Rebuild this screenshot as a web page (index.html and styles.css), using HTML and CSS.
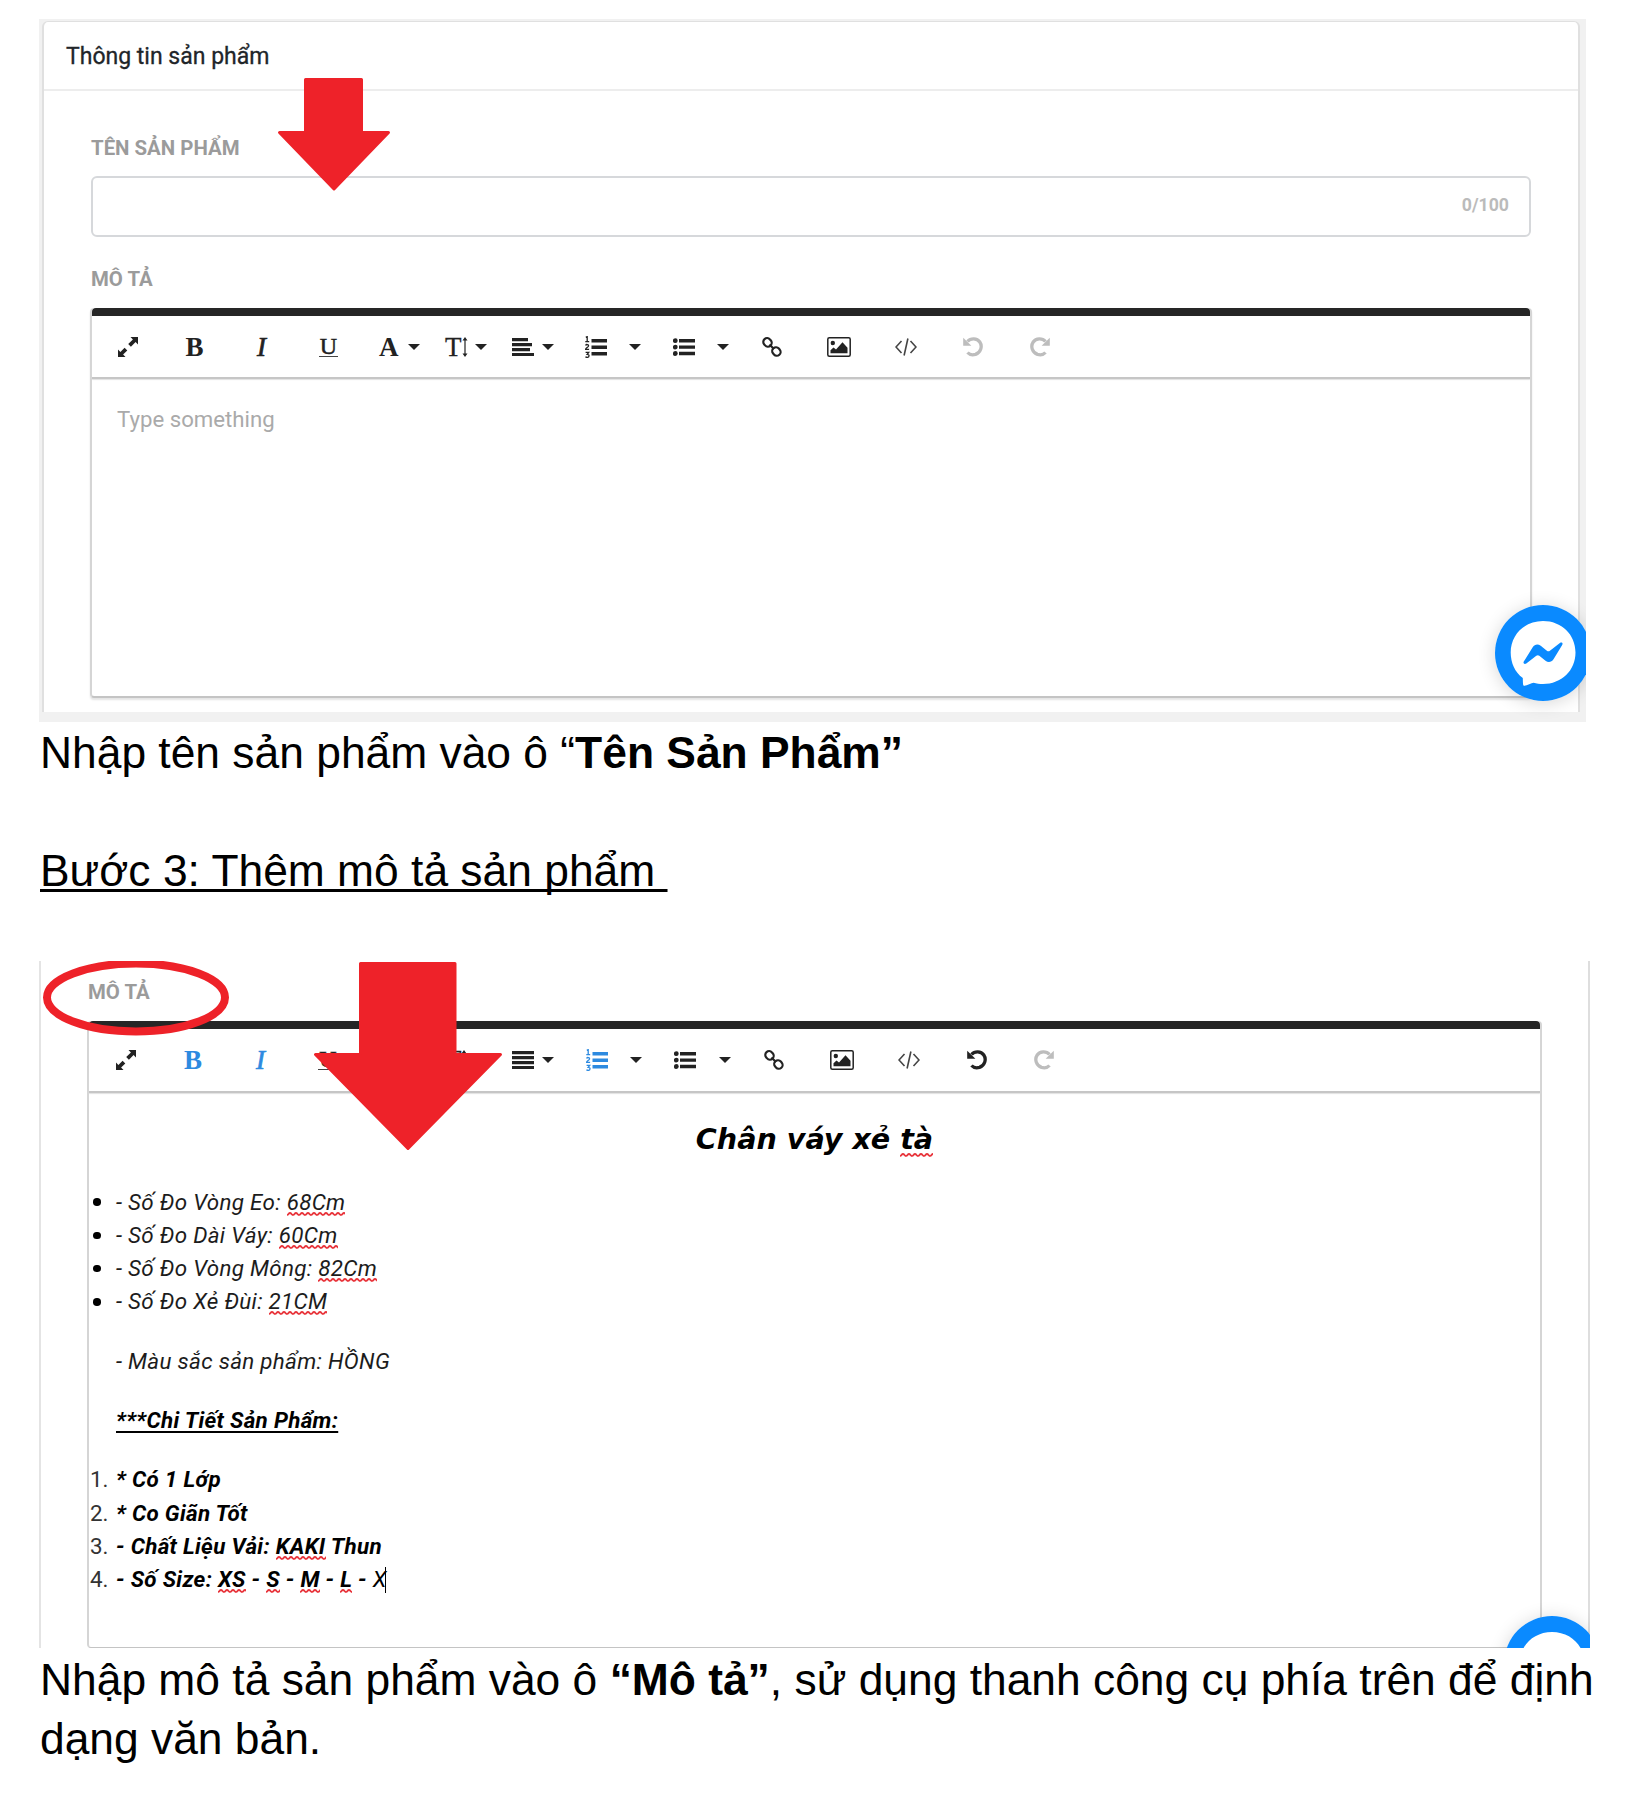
FILE: index.html
```html
<!DOCTYPE html>
<html lang="vi">
<head>
<meta charset="utf-8">
<title>Hướng dẫn thêm sản phẩm</title>
<link rel="stylesheet" href="styles.css">
</head>
<body>
<svg class="defs" width="0" height="0" aria-hidden="true">
  <symbol id="expand" viewBox="0 0 20 20"><path d="M20 0v7.500l-2.400-2.400-4.700 4.700-2.700-2.700 4.700-4.700L12.500 0zM0 20v-7.500l2.400 2.400 4.200-4.200 2.700 2.700-4.200 4.200L7.500 20z"/></symbol>
  <symbol id="caret" viewBox="0 0 12 6"><path d="M0 0h12L6 6z"/></symbol>
  <symbol id="updown" viewBox="0 0 6 20"><path d="M3 0l2.500 3.500H3.600v13h1.900L3 20 .5 16.500h1.900v-13H.5z"/></symbol>
  <symbol id="left" viewBox="0 0 22 18"><path d="M0 0h16v3.200H0zM0 5h20v3.200H0zM0 10h18v3.200H0zM0 15h22v3.200H0z"/></symbol>
  <symbol id="justify" viewBox="0 0 22 18"><path d="M0 0h22v3.200H0zM0 5h22v3.200H0zM0 10h22v3.200H0zM0 15h22v3.200H0z"/></symbol>
  <symbol id="ol" viewBox="0 0 22 22"><path d="M6.500 3H22v3.400H6.500zM6.500 9.500H22v3.400H6.500zM6.500 16H22v3.400H6.500z"/><path d="M.8 1.400L2.200.6v4.800M.3 5.600h3.900M.6 9.400C1.200 8 3.800 8.300 3.500 10 3.300 11.200.8 12 .6 13.300h3.500M.6 16.400h3.100L2.200 18.300c2.500 0 2.400 3.100 0 3.100-.8 0-1.400-.3-1.700-.8" fill="none" stroke="currentColor" stroke-width="1.300"/></symbol>
  <symbol id="ul" viewBox="0 0 22 18"><path d="M6 1h16v3.400H6zM6 7.400h16v3.400H6zM6 13.800h16v3.400H6z"/><circle cx="2.300" cy="2.700" r="2.400"/><circle cx="2.300" cy="9.100" r="2.400"/><circle cx="2.300" cy="15.500" r="2.400"/></symbol>
  <symbol id="link" viewBox="0 0 20 20"><g fill="none" stroke="currentColor" stroke-width="2.200"><rect x="1.100" y="1.600" width="8.800" height="7.600" rx="3.800" transform="rotate(48 5.500 5.400)"/><rect x="10" y="10.700" width="8.800" height="7.600" rx="3.800" transform="rotate(48 14.400 14.500)"/><path d="M7.500 7.500l4.500 4.500"/></g></symbol>
  <symbol id="image" viewBox="0 0 24 20"><rect x=".8" y=".8" width="22.400" height="18.400" rx="1.500" fill="none" stroke="currentColor" stroke-width="1.500"/><circle cx="5.800" cy="6" r="2.200"/><path d="M3.500 16.200v-3l3-2.700 2.500 1.900 6.500-7.200 5 5.500v5.500z"/></symbol>
  <symbol id="code" viewBox="0 0 22 18"><path d="M6.500 3L1 9l5.500 6M15.500 3L21 9l-5.500 6M12.900.5L9.100 17.500" fill="none" stroke="currentColor" stroke-width="1.600"/></symbol>
  <symbol id="undo" viewBox="0 0 20 20"><path d="M4.500 4.500C7.500 1 14 .8 16.800 5c3 4.500.8 10.500-4.300 12.400-3 .8-6.200.1-8-1.900" fill="none" stroke="currentColor" stroke-width="3.300"/><path d="M.2.800v8h8.200z"/></symbol>
  <symbol id="messenger" viewBox="0 0 96 96"><circle cx="48" cy="48" r="48" fill="#0a8aff"/><path fill="#fff" d="M48 16c18.500 0 32.500 13.500 32.500 31.500S66.500 79 48 79c-3.300 0-6.500-.4-9.500-1.300-2 0-6.500 3-9 3-1.700 0-1.500-1-1.700-7.700C20 67.200 15.700 58 15.700 47.500 15.700 29.500 29.500 16 48 16z"/><path fill="#0a8aff" d="M28.800 56.500l8.900-14.300c2-3 5.200-3.500 8-1.500l6.200 5c1 .8 2 .8 3 0l10-7.700c1.800-1.200 3.400.2 2.300 2L58.500 54.300c-2 3-5.200 3.500-8 1.500l-6.200-5c-1-.8-2-.8-3 0l-10 7.700c-1.800 1.200-3.500-.2-2.500-2z"/></symbol>
</svg>
<main class="doc">

  <section class="shot shot-form">
    <div class="card">
      <header class="card-head"><span class="card-title">Thông tin sản phẩm</span></header>
      <div class="card-body">
        <div class="label">TÊN SẢN PHẨM</div>
        <div class="field"><span class="count">0/100</span></div>
        <div class="label label-desc">MÔ TẢ</div>
        <div class="editor">
          <div class="toolbar">
            <span class="tool"><svg class="i20"><use href="#expand"/></svg></span>
            <span class="tool glyph bold">B</span>
            <span class="tool glyph ital">I</span>
            <span class="tool glyph wide"><span class="under">U</span></span>
            <span class="tool glyph drop bold color">A<svg class="caret"><use href="#caret"/></svg></span>
            <span class="tool glyph drop"><span class="size">T<svg class="updown"><use href="#updown"/></svg></span><svg class="caret"><use href="#caret"/></svg></span>
            <span class="tool drop"><svg class="i22"><use href="#left"/></svg><svg class="caret"><use href="#caret"/></svg></span>
            <span class="tool list"><svg class="i22 tall"><use href="#ol"/></svg></span>
            <span class="more"><svg class="caret"><use href="#caret"/></svg></span>
            <span class="tool list"><svg class="i22"><use href="#ul"/></svg></span>
            <span class="more last"><svg class="caret"><use href="#caret"/></svg></span>
            <span class="tool"><svg class="i20"><use href="#link"/></svg></span>
            <span class="tool"><svg class="i24"><use href="#image"/></svg></span>
            <span class="tool"><svg class="i22 thin"><use href="#code"/></svg></span>
            <span class="tool off"><svg class="i20"><use href="#undo"/></svg></span>
            <span class="tool off"><svg class="i20 flip"><use href="#undo"/></svg></span>
          </div>
          <div class="area"><span class="placeholder">Type something</span></div>
        </div>
      </div>
    </div>
    <svg class="chat"><use href="#messenger"/></svg>
    <svg class="arrow arrow-small" viewBox="0 0 114 114"><path d="M28.500 1.500h56v53h27L57 111 2.500 54.500h26z"/></svg>
  </section>

  <p class="para">Nhập tên sản phẩm vào ô “<b>Tên Sản Phẩm”</b></p>
  <p class="para step"><u>Bước 3: Thêm mô tả sản phẩm&nbsp;</u></p>

  <section class="shot shot-desc">
    <div class="label">MÔ TẢ</div>
    <div class="editor">
      <div class="toolbar">
        <span class="tool"><svg class="i20"><use href="#expand"/></svg></span>
        <span class="tool glyph bold on">B</span>
        <span class="tool glyph ital on">I</span>
        <span class="tool glyph wide"><span class="under">U</span></span>
        <span class="tool glyph drop bold color">A<svg class="caret"><use href="#caret"/></svg></span>
        <span class="tool glyph drop"><span class="size">T<svg class="updown"><use href="#updown"/></svg></span><svg class="caret"><use href="#caret"/></svg></span>
        <span class="tool drop"><svg class="i22"><use href="#justify"/></svg><svg class="caret"><use href="#caret"/></svg></span>
        <span class="tool list on"><svg class="i22 tall"><use href="#ol"/></svg></span>
        <span class="more"><svg class="caret"><use href="#caret"/></svg></span>
        <span class="tool list"><svg class="i22"><use href="#ul"/></svg></span>
        <span class="more last"><svg class="caret"><use href="#caret"/></svg></span>
        <span class="tool"><svg class="i20"><use href="#link"/></svg></span>
        <span class="tool"><svg class="i24"><use href="#image"/></svg></span>
        <span class="tool"><svg class="i22 thin"><use href="#code"/></svg></span>
        <span class="tool"><svg class="i20"><use href="#undo"/></svg></span>
        <span class="tool off"><svg class="i20 flip"><use href="#undo"/></svg></span>
      </div>
      <div class="area">
        <h2 class="name">Chân váy xẻ <span class="typo">tà</span></h2>
        <ul class="sizes">
          <li><span>- Số Đo Vòng Eo: <span class="typo">68Cm</span></span></li>
          <li><span>- Số Đo Dài Váy: <span class="typo">60Cm</span></span></li>
          <li><span>- Số Đo Vòng Mông: <span class="typo">82Cm</span></span></li>
          <li><span>- Số Đo Xẻ Đùi: <span class="typo">21CM</span></span></li>
        </ul>
        <p class="line">- Màu sắc sản phẩm: HỒNG</p>
        <p class="line strong"><u>***Chi Tiết Sản Phẩm:</u></p>
        <ol class="details">
          <li><span class="num">1.</span><b>* Có 1 Lớp</b></li>
          <li><span class="num">2.</span><b>* Co Giãn Tốt</b></li>
          <li><span class="num">3.</span><b>- Chất Liệu Vải: <span class="typo">KAKI</span> Thun</b></li>
          <li><span class="num">4.</span><b>- Số Size: <span class="typo">XS</span> - <span class="typo">S</span> - <span class="typo">M</span> - <span class="typo">L</span> - <span class="last-word">X</span></b><i class="cursor"></i></li>
        </ol>
      </div>
    </div>
    <svg class="chat"><use href="#messenger"/></svg>
    <svg class="ring" viewBox="0 0 186 76"><ellipse cx="93" cy="37.500" rx="89" ry="34"/></svg>
    <svg class="arrow arrow-big" viewBox="0 0 188 190"><path d="M46.500 1.500h94.500v91h45.500L94 186.500 1.500 92.500h45z"/></svg>
  </section>

  <p class="para end">Nhập mô tả sản phẩm vào ô <b>“Mô tả”</b>, sử dụng thanh công cụ phía trên để định<br>dạng văn bản.</p>
</main>
</body>
</html>
```
FILE: styles.css
```css
* { box-sizing: border-box; }
body { margin: 0; background: #fff; color: #000; font-family: "Liberation Sans", Arial, sans-serif; }
.defs { position: absolute; }
.doc { width: 1648px; height: 1798px; padding: 19px 0 0 40px; overflow: hidden; }
svg { display: block; fill: currentColor; overflow: visible; }

/* screenshots inside the document */
.shot { position: relative; overflow: hidden; margin-left: -1px; font-family: Roboto, sans-serif; color: #222; }
.shot-form { width: 1547px; height: 703px; padding: 2px 6px 10px 3px; background: #f1f1f1; }
.card { height: 691px; background: #fff; border: 2px solid #e0e0e0; border-top-width: 1px; border-bottom: 0; border-radius: 6px 6px 0 0; }
.card-head { height: 69px; padding: 2px 0 0 22px; border-bottom: 2px solid #ededed; display: flex; align-items: center; }
.card-title { font-size: 23px; font-weight: 400; color: #212529; -webkit-text-stroke: .3px #212529; white-space: nowrap; }
.card-body { padding: 45px 46px 0 46px; }
.label { height: 24px; line-height: 24px; padding-left: 1px; font-size: 20.400px; font-weight: 700; color: #9b9b9b; white-space: nowrap; }
.field { height: 61px; margin: 16px 1px 0; border: 2px solid #d6d8db; border-radius: 6px; display: flex; align-items: center; justify-content: flex-end; padding: 0 20px 3px; }
.count { font-size: 17.700px; font-weight: 700; color: #bbb; }
.label-desc { margin-top: 30px; }
.card-body .editor { margin-top: 17px; height: 390px; }

/* rich text editor */
.editor { --pitch: 67px; border: 1px solid #ccc; border-width: 0 2px 2px; border-color: #d5d5d5; border-bottom-color: #c4c4c4; border-radius: 4px; box-shadow: 0 2px 2px #e4e4e4; }
.toolbar { display: flex; align-items: center; height: 71px; border-top: 8px solid #262626; border-bottom: 2px solid #c6c6c6; box-shadow: 0 1px 1px #e2e2e2; border-radius: 4px 4px 0 0; padding: 0 0 0 2px; color: #222; }
.tool { flex: none; width: var(--pitch); height: 30px; display: flex; align-items: center; justify-content: center; }
.tool.list { width: 60px; }
.tool.wide { margin-right: 3px; }
.more { width: 28px; padding-left: 3px; }
.more.last { width: 24px; }
.drop { justify-content: flex-start; padding-left: 13px; }
.drop .caret { margin-left: 8px; }
.drop.color { padding-left: 14px; }
.drop.color .caret { margin-left: 9px; }
.caret { width: 12px; height: 6px; flex: none; }
.i20 { width: 20px; height: 20px; }
.i22 { width: 22px; height: 18px; }
.i22.tall { height: 22px; }
.i24 { width: 24px; height: 20px; }
.thin { color: #444; }
.flip { transform: scaleX(-1); }
.glyph { font: 27px/30px "Liberation Serif", "Times New Roman", serif; }
.bold { font-weight: 700; }
.ital { font-style: italic; -webkit-text-stroke: .7px currentColor; }
.under { height: 20px; line-height: 18px; font-size: 24px; -webkit-text-stroke: .5px currentColor; border-bottom: 1.500px solid #444; padding: 0 1px; }
.size { display: flex; align-items: center; -webkit-text-stroke: .3px currentColor; }
.updown { width: 6px; height: 20px; }
.size + .caret { margin-left: 7px; }
.on { color: #2d8ae0; }
.off { color: #bdbdbd; }
.placeholder { display: block; padding: 25px 0 0 25px; font-size: 22.200px; line-height: 30px; color: #aaa; }

/* second screenshot */
.shot-desc { width: 1551px; height: 687px; box-shadow: inset 2px 0 #e4e4e4, inset -2px 0 #dedede; margin-top: 61px; padding: 19px 48px 0 48px; }
.shot-desc .label { padding-left: 1px; }
.shot-desc .editor { --pitch: 67.400px; margin-top: 17px; height: 627px; border-bottom-width: 1px; box-shadow: none; }
.shot-desc .toolbar { height: 72px; padding-left: 3px; }
.shot-desc .list { width: 60.500px; }
.shot-desc .more.last { width: 25px; }
.shot-desc .area { font-size: 22.400px; line-height: 33.300px; letter-spacing: .3px; color: #1c1c1c; }
.name { margin: 28px 0 0; text-align: center; font: italic 700 28.600px/36px "DejaVu Sans", Verdana, sans-serif; letter-spacing: 0; color: #000; }
.sizes, .details { list-style: none; margin: 0; padding: 0; }
.sizes { margin-top: 28.500px; font-style: italic; }
.sizes li, .details li { height: 33.300px; display: flex; align-items: center; white-space: pre; }
.sizes li::before { content: ""; width: 7.500px; height: 7.500px; border-radius: 50%; background: #000; margin: 0 15.500px 0 4px; }
.line { margin: 26px 0 0 27px; font-style: italic; }
.strong { font-weight: 700; color: #000; }
.strong u { text-decoration-thickness: 2px; text-underline-offset: 3px; text-decoration-skip-ink: none; }
.details { margin-top: 26px; }
.details b { font-style: italic; color: #000; }
.num { width: 27px; padding-left: 1px; letter-spacing: 0; color: #333; }
.last-word { font-weight: 400; }
.typo { padding-bottom: 1px; background: url("data:image/svg+xml,%3Csvg xmlns='http://www.w3.org/2000/svg' width='6' height='4'%3E%3Cpath d='M-1.500 1Q0 4 1.500 2T4.500 2T7.500 2' fill='none' stroke='%23e8353c' stroke-width='1.800'/%3E%3C/svg%3E") left bottom repeat-x; }
.cursor { width: 1.500px; height: 26px; background: #000; margin-left: -2px; }

/* red marks and chat bubble on top of the screenshots */
.chat { position: absolute; width: 96px; height: 96px; border-radius: 50%; box-shadow: 0 2px 18px rgba(0,0,0,.16); }
.shot-form .chat { left: 1456px; top: 586px; }
.shot-desc .chat { left: 1465px; top: 655px; }
.arrow { position: absolute; fill: #ee2229; stroke: #ee2229; stroke-width: 3; stroke-linejoin: round; }
.arrow-small { left: 238px; top: 59px; width: 114px; height: 114px; }
.arrow-big { left: 275px; top: 1px; width: 188px; height: 190px; }
.ring { position: absolute; left: 4px; top: -1px; width: 186px; height: 76px; fill: none; stroke: #ee2229; stroke-width: 8; }

/* document text */
.para { margin: 1px 0 0; font-size: 44.370px; line-height: 59px; white-space: nowrap; }
.para.step { margin-top: 59px; }
.para.end { margin-top: 2px; }
.step u { text-decoration-thickness: 3px; text-underline-offset: 3px; text-decoration-skip-ink: none; }
```
